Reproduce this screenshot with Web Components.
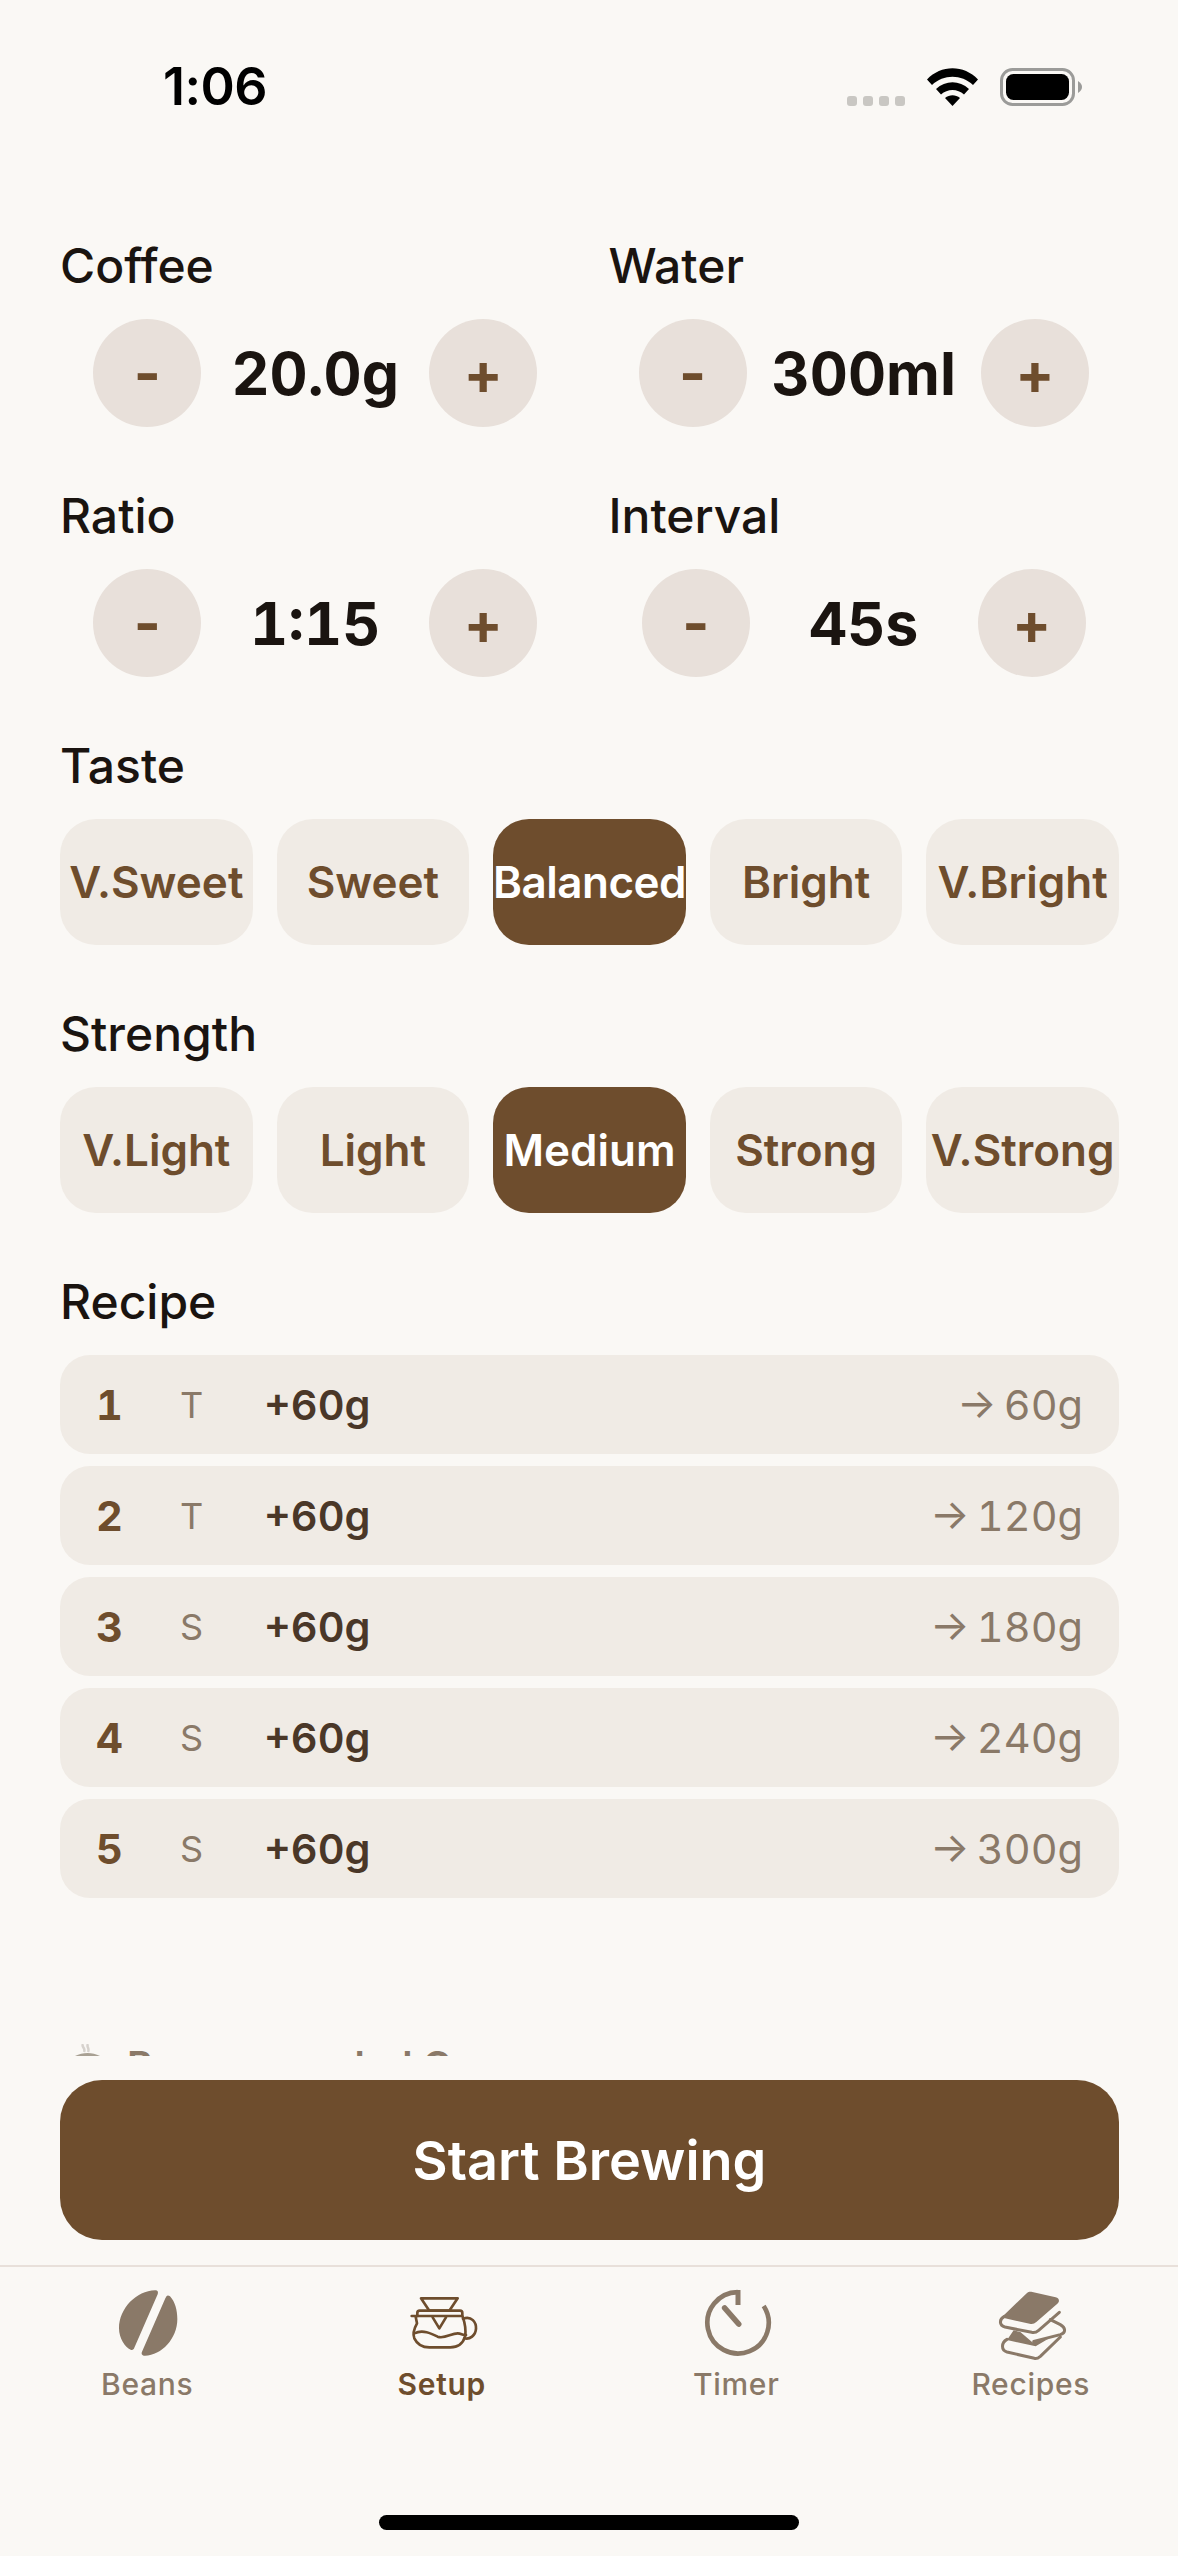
<!DOCTYPE html>
<html lang="en">
<head>
<meta charset="utf-8">
<title>Setup</title>
<style>
  html, body { margin: 0; padding: 0; }
  body {
    width: 1178px;
    height: 2556px;
    overflow: hidden;
    background: #faf8f5;
    font-family: Inter, "Liberation Sans", sans-serif;
    color: #1a1410;
  }
  #app { display: flex; flex-direction: column; height: 2556px; }
</style>
</head>
<body>
<div id="app">
  <status-bar time="1:06"></status-bar>
  <setup-screen>
    <stepper-grid>
      <stepper-field label="Coffee" value="20.0g"></stepper-field>
      <stepper-field label="Water" value="300ml"></stepper-field>
      <stepper-field label="Ratio" value="1:15"></stepper-field>
      <stepper-field label="Interval" value="45s"></stepper-field>
    </stepper-grid>
    <choice-group label="Taste" options="V.Sweet,Sweet,Balanced,Bright,V.Bright" active="Balanced"></choice-group>
    <choice-group label="Strength" options="V.Light,Light,Medium,Strong,V.Strong" active="Medium"></choice-group>
    <recipe-list label="Recipe">
      <pour-row step="1" kind="T" add="+60g" total="→ 60g"></pour-row>
      <pour-row step="2" kind="T" add="+60g" total="→ 120g"></pour-row>
      <pour-row step="3" kind="S" add="+60g" total="→ 180g"></pour-row>
      <pour-row step="4" kind="S" add="+60g" total="→ 240g"></pour-row>
      <pour-row step="5" kind="S" add="+60g" total="→ 300g"></pour-row>
    </recipe-list>
    <recommend-head>Recommended Cups</recommend-head>
  </setup-screen>
  <brew-action>Start Brewing</brew-action>
  <tab-bar>
    <tab-item label="Beans" icon="beans"></tab-item>
    <tab-item label="Setup" icon="setup" active></tab-item>
    <tab-item label="Timer" icon="timer"></tab-item>
    <tab-item label="Recipes" icon="recipes"></tab-item>
  </tab-bar>
</div>

<script>
const define = (name, css, render) => {
  customElements.define(name, class extends HTMLElement {
    connectedCallback() {
      if (this.shadowRoot) return;
      this.attachShadow({ mode: 'open' });
      this.shadowRoot.innerHTML = `<style>${css}</style>${render(this)}`;
    }
  });
};

define('status-bar', `
  :host { display: flex; align-items: center; justify-content: space-between; box-sizing: border-box;
          height: 174px; padding: 0 96px 0 163px; flex: none; }
  .time { font-size: 52px; font-weight: 600; line-height: 62px; color: #000; letter-spacing: -0.5px; }
  .icons { display: flex; align-items: flex-end; height: 38px; }
  .dots { display: flex; gap: 6px; margin-right: 22px; }
  .dots i { width: 10px; height: 10px; border-radius: 3px; background: #c9c7c3; }
  svg { display: block; }
  .wifi { margin-right: 22px; }
`, el => `
  <span class="time">${el.getAttribute('time')}</span>
  <div class="icons">
    <div class="dots"><i></i><i></i><i></i><i></i></div>
    <svg class="wifi" width="51" height="38" viewBox="0 0 51 38">
      <path d="M0 11.500C14 -3.500 37 -3.500 51 11.500L46 17C34.500 6 16.500 6 5 17Z" fill="#000"/>
      <path d="M9 21C18.500 12 32.500 12 42 21L37 26.500C30.500 20.500 20.500 20.500 14 26.500Z" fill="#000"/>
      <path d="M18 30C22.500 26.200 28.500 26.200 33 30L25.500 38Z" fill="#000"/>
    </svg>
    <svg width="82" height="38" viewBox="0 0 82 38">
      <rect x="1.500" y="1.500" width="72" height="35" rx="11" fill="none" stroke="#9b9b99" stroke-width="3"/>
      <rect x="6" y="6" width="63" height="26" rx="7.500" fill="#000"/>
      <path d="M78 13C81 15 82 17 82 19C82 21 81 23 78 25Z" fill="#9b9b99"/>
    </svg>
  </div>
`);

define('setup-screen', `
  :host { display: flex; flex-direction: column; gap: 60px; flex: 1; min-height: 0; overflow: hidden;
          box-sizing: border-box; padding: 63px 59px 0 60px; }
`, () => `<slot></slot>`);

define('stepper-grid', `
  :host { display: grid; grid-template-columns: 1fr 1fr; gap: 60px 38px; flex: none; }
`, () => `<slot></slot>`);

define('stepper-field', `
  :host { display: block; }
  .label { font-size: 48px; font-weight: 500; line-height: 58px; color: #1a1410; margin-bottom: 24px; }
  .row { display: flex; justify-content: center; align-items: center; gap: 25px; }
  .btn { width: 108px; height: 108px; border-radius: 50%; background: #e8e0da; color: #6e4d2d;
         display: flex; align-items: center; justify-content: center; flex: none;
         font-size: 58px; font-weight: 700; line-height: 1; }
  .value { min-width: 178px; text-align: center; font-size: 59px; font-weight: 700; line-height: 72px;
           padding-top: 2px; color: #1a1410; font-variant-numeric: tabular-nums; }
`, el => `
  <div class="label">${el.getAttribute('label')}</div>
  <div class="row">
    <div class="btn">-</div>
    <div class="value">${el.getAttribute('value')}</div>
    <div class="btn">+</div>
  </div>
`);

define('choice-group', `
  :host { display: block; flex: none; }
  .label { font-size: 48px; font-weight: 500; line-height: 58px; color: #1a1410; margin-bottom: 24px; }
  .row { display: grid; grid-template-columns: repeat(5, minmax(0, 1fr)); gap: 24px; }
  .pill { height: 126px; border-radius: 36px; background: #f0ebe5; color: #6e4d2d;
          display: flex; align-items: center; justify-content: center; white-space: nowrap;
          font-size: 44px; font-weight: 600; }
  .pill.on { background: #6e4d2d; color: #fff; }
  .pill.tight { letter-spacing: -0.5px; }
`, el => `
  <div class="label">${el.getAttribute('label')}</div>
  <div class="row">
    ${el.getAttribute('options').split(',').map(o => {
      const on = o === el.getAttribute('active');
      return `<div class="pill${on ? ' on' : ''}${on && o.length > 7 ? ' tight' : ''}">${o}</div>`;
    }).join('')}
  </div>
`);

define('recipe-list', `
  :host { display: block; flex: none; }
  .label { font-size: 48px; font-weight: 500; line-height: 58px; color: #1a1410; margin-bottom: 24px; }
  .rows { display: flex; flex-direction: column; gap: 12px; }
`, el => `
  <div class="label">${el.getAttribute('label')}</div>
  <div class="rows"><slot></slot></div>
`);

define('pour-row', `
  :host { display: flex; align-items: center; gap: 24px; box-sizing: border-box; height: 99px;
          padding: 0 36px; border-radius: 30px; background: #f0ebe5; font-size: 41.500px;
          font-variant-numeric: tabular-nums; }
  .step { width: 60px; font-weight: 700; color: #6e4d2d; }
  .kind { width: 60px; font-size: 36px; color: #8a7968; }
  .add { flex: 1; font-weight: 600; color: #4a3728; }
  .total { color: #8a7968; word-spacing: -4px; }
`, el => `
  <span class="step">${el.getAttribute('step')}</span>
  <span class="kind">${el.getAttribute('kind')}</span>
  <span class="add">${el.getAttribute('add')}</span>
  <span class="total">${el.getAttribute('total')}</span>
`);

/* section heading that sits below the fold, only its top edge shows above the button */
define('recommend-head', `
  :host { display: flex; align-items: center; flex: none; margin-top: 82px; gap: 27px; padding-left: 15px;
          font-size: 39.300px; font-weight: 600; line-height: 52px; color: #8a7968; }
  svg { flex: none; }
`, () => `
  <svg width="25" height="44" viewBox="0 0 25 44">
    <path d="M8 0C6 3 11 4 9 8M13 0C11 3 15 4 13 8" fill="none" stroke="#d6d2cd" stroke-width="2.500"/>
    <path d="M0 12C8 8 17 8 25 12V30H0Z" fill="#a8a093"/>
  </svg>
  <span><slot></slot></span>
`);

define('brew-action', `
  :host { display: block; flex: none; padding: 24px 59px 25px 60px; }
  .btn { height: 160px; border-radius: 42px; background: #6e4d2d; color: #fff;
         display: flex; align-items: center; justify-content: center;
         font-size: 54px; font-weight: 600; }
`, () => `<div class="btn"><slot></slot></div>`);

define('tab-bar', `
  :host { display: flex; flex-direction: column; flex: none; box-sizing: border-box; height: 291px;
          border-top: 2px solid #e8e0da; }
  .tabs { display: grid; grid-template-columns: repeat(4, 1fr); padding-top: 16px; }
  .home { width: 420px; height: 15px; border-radius: 8px; background: #000; margin: auto auto 26px; }
`, () => `<div class="tabs"><slot></slot></div><div class="home"></div>`);

const TAB_ICONS = {
  beans: `<svg width="80" height="80" viewBox="141 129 240 240" fill="#8a7968">
    <path d="M285 151C230 152 177 205 177 265C177 295 195 322 212 329C218 331 221 328 223 323L293 163C296 155 292 150 285 151Z"/>
    <path d="M320 168C322 165 327 166 330 169C345 185 352 210 352 238C352 295 305 347 255 347C246 347 243 341 246 335L316 175Z"/>
  </svg>`,
  setup: `<svg width="80" height="80" viewBox="3 -21 240 240" fill="none" stroke="#6e4d2d" stroke-width="8" stroke-linejoin="round" stroke-linecap="round">
    <path d="M60 25H170L145 62H85Z"/>
    <path d="M56 62H177C181 62 184 65 184 69V78H49V69C49 65 52 62 56 62Z"/>
    <path d="M32 78H50M44 80L48 100C38 118 34 130 40 145C48 162 65 172 85 172H148C170 172 186 160 192 140C196 120 192 100 185 80"/>
    <path d="M186 86C212 76 226 98 225 116C224 136 206 150 190 145"/>
    <path d="M95 82L115 115L135 82"/>
    <path d="M40 130C65 118 90 130 110 140C130 148 150 130 170 130C180 130 190 137 195 135"/>
  </svg>`,
  timer: `<svg width="80" height="80" viewBox="109 129 240 240" fill="none" stroke="#8a7968">
    <path d="M312 198A92 92 0 1 1 234 156.500" stroke-width="14"/>
    <path d="M235 150V195" stroke-width="15"/>
    <path d="M195 204L237 252" stroke-width="17" stroke-linecap="round"/>
  </svg>`,
  recipes: `<svg width="80" height="80" viewBox="0 3 240 240" fill="none" stroke="#8a7968" stroke-width="9" stroke-linecap="round" stroke-linejoin="round">
    <path d="M108 33C112 29 118 29 124 30L194 46C205 49 207 58 199 65L136 120C130 125 124 127 116 125L42 109C36 108 34 104 40 98Z" fill="#8a7968" stroke="none"/>
    <path d="M40 103C24 112 24 130 42 135L122 151C130 153 137 150 143 145L205 91"/>
    <path d="M178 113L208 128C224 137 226 152 208 158L128 178"/>
    <path d="M68 145L88 150L124 181L172 170L134 193L48 174Z" fill="#8a7968" stroke="none"/>
    <path d="M48 172C30 182 30 205 48 210L130 229C136 231 142 228 148 223L208 165"/>
  </svg>`
};

define('tab-item', `
  :host { display: flex; flex-direction: column; align-items: center; gap: 3px; }
  svg { display: block; }
  .label { font-size: 30px; font-weight: 500; line-height: 36px; letter-spacing: 0.7px; color: #8a7968; }
  :host([active]) .label { color: #6e4d2d; font-weight: 600; }
`, el => `
  ${TAB_ICONS[el.getAttribute('icon')]}
  <span class="label">${el.getAttribute('label')}</span>
`);
</script>
</body>
</html>
